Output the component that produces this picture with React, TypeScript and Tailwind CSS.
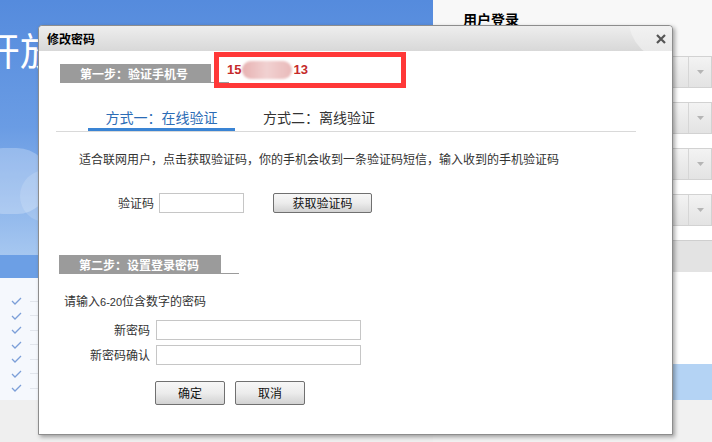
import React from "react";

const cjk = { fontFamily: "'Noto Sans CJK SC', 'Noto Sans', sans-serif" };

function Dropdown() {
  return (
    <div className="ml-[18px] h-[32px] border border-[#d2d2d2] bg-gradient-to-b from-[#f3f3f3] to-[#e3e3e3] flex justify-end">
      <div className="w-[23px] border-l border-[#d6d6d6] flex items-center justify-center">
        <svg width="7" height="4" viewBox="0 0 7 4">
          <path d="M0 0 L7 0 L3.5 4 Z" fill="#b5b5b5" />
        </svg>
      </div>
    </div>
  );
}

function Check() {
  return (
    <div className="flex items-center h-[14.5px]">
      <svg width="11" height="8" viewBox="0 0 11 8" className="ml-[11px]">
        <path d="M1 4 L4 7 L10 1" stroke="#7c9fd8" strokeWidth="1.3" fill="none" />
      </svg>
      <div className="ml-[8px] w-[30px] h-px bg-[#e1e5ec]" />
    </div>
  );
}

function Btn({ children, w, h }: { children: React.ReactNode; w: string; h: string }) {
  return (
    <button
      className={`${w} ${h} border border-[#707070] rounded-[2px] bg-gradient-to-b from-[#f7f7f7] via-[#ececec] to-[#d2d2d2] text-[12px] text-[#111] flex items-center justify-center p-0`}
      style={cjk}
    >
      {children}
    </button>
  );
}

export default function App() {
  return (
    <div className="relative w-[712px] h-[442px] overflow-hidden flex" style={cjk}>
      {/* left background */}
      <div className="w-[433px] h-full flex flex-col">
        <div className="relative h-[255px] bg-gradient-to-b from-[#558bdd] via-[#6a9ce4] to-[#a6c7f0] overflow-hidden">
          <div className="absolute left-[-18px] top-[26px] text-[38px] leading-[46px] text-white">开放</div>
          <div className="absolute left-[-30px] top-[148px] w-[80px] h-[66px] rounded-full bg-white/25" />
          <div className="absolute left-[20px] top-[170px] w-[60px] h-[52px] rounded-full bg-white/15" />
        </div>
        <div className="h-[23px] bg-[#6c9fe5]" />
        <div className="flex-1 bg-[#f5f8fd] pt-[16px] flex flex-col">
          <Check />
          <Check />
          <Check />
          <Check />
          <Check />
          <Check />
          <Check />
        </div>
        <div className="h-[42px] bg-[#efefef]" />
      </div>
      {/* right panel */}
      <div className="flex-1 h-full flex flex-col bg-[#f8f8f8]">
        <div className="h-[56px] pl-[30px] pt-[10px] text-[14px] font-bold text-black leading-[18px]">用户登录</div>
        <Dropdown />
        <div className="h-[14px] bg-white" />
        <Dropdown />
        <div className="h-[14px] bg-white" />
        <Dropdown />
        <div className="h-[14px] bg-white" />
        <Dropdown />
        <div className="h-[14px] bg-white" />
        <div className="h-[32px] bg-[#e3e3e3] border-t border-[#cfcfcf]" />
        <div className="h-[92px] bg-white" />
        <div className="h-[36px] bg-[#b4d3f4]" />
        <div className="flex-1 bg-[#f1f1f1]" />
      </div>

      {/* dialog */}
      <div className="absolute left-[38px] top-[25px] w-[635px] h-[410px] bg-white border border-[#8d8d8d] rounded-t-[4px] shadow-[2px_2px_4px_rgba(0,0,0,0.35)] flex flex-col">
        <div className="relative h-[25px] rounded-t-[4px] bg-gradient-to-b from-[#eeeeee] to-[#d8d8d8] flex items-center overflow-hidden">
          <span className="pl-[8px] text-[12px] font-bold text-black">修改密码</span>
          <div className="absolute left-[590px] top-[-6px] w-[80px] h-[40px] rounded-bl-[40px] bg-gradient-to-b from-[#f4f4f4] to-[#e6e6e6]" />
          <svg className="absolute left-[617px] top-[8px]" width="10" height="10" viewBox="0 0 10 10">
            <path d="M1 1 L9 9 M9 1 L1 9" stroke="#555" strokeWidth="2.2" />
          </svg>
        </div>

        {/* step 1 */}
        <div className="mt-[13px] ml-[21px] flex items-end">
          <div className="w-[151px] h-[19px] bg-[#9b9b9b] text-white text-[12px] font-bold leading-[19px] pl-[20px]">第一步：验证手机号</div>
          <div className="w-[18px] h-px bg-[#9b9b9b]" />
        </div>

        {/* tabs */}
        <div className="mt-[24px] ml-[17px] w-[580px] border-b border-[#d9d9d9] flex items-end">
          <div className="ml-[32px] w-[147px] text-center text-[14px] leading-[20px] pb-px text-[#2b6cb6] border-b-[3px] border-[#3a84d4]">方式一：在线验证</div>
          <div className="ml-[28px] text-[14px] leading-[20px] pb-[4px] text-[#333]">方式二：离线验证</div>
        </div>

        <div className="mt-[18px] ml-[40px] text-[12px] leading-[18px] text-[#333]">适合联网用户，点击获取验证码，你的手机会收到一条验证码短信，输入收到的手机验证码</div>

        <div className="mt-[25px] ml-[79px] flex items-center">
          <span className="text-[12px] text-[#333] leading-[20px]">验证码</span>
          <div className="ml-[5px] w-[85px] h-[20px] border border-[#c6c6c6]" />
          <div className="ml-[29px]">
            <Btn w="w-[99px]" h="h-[20px]">获取验证码</Btn>
          </div>
        </div>

        {/* step 2 */}
        <div className="mt-[42px] ml-[20px] flex items-end">
          <div className="w-[162px] h-[19px] bg-[#9b9b9b] text-white text-[12px] font-bold leading-[19px] pl-[20px]">第二步：设置登录密码</div>
          <div className="w-[18px] h-px bg-[#9b9b9b]" />
        </div>

        <div className="mt-[18px] ml-[25px] text-[12px] leading-[18px] text-[#333]">
          请输入<span style={{ fontFamily: "'Liberation Sans', sans-serif" }} className="text-[11px]">6-20</span>位含数字的密码
        </div>

        <div className="mt-[9px] flex items-center">
          <span className="w-[111px] text-right text-[12px] text-[#333] leading-[20px]">新密码</span>
          <div className="ml-[6px] w-[205px] h-[20px] border border-[#c6c6c6]" />
        </div>
        <div className="mt-[5px] flex items-center">
          <span className="w-[111px] text-right text-[12px] text-[#333] leading-[20px]">新密码确认</span>
          <div className="ml-[6px] w-[205px] h-[20px] border border-[#c6c6c6]" />
        </div>

        <div className="mt-[16px] ml-[116px] flex gap-[10px]">
          <Btn w="w-[70px]" h="h-[24px]">确定</Btn>
          <Btn w="w-[70px]" h="h-[24px]">取消</Btn>
        </div>

        {/* red annotation */}
        <div className="absolute left-[175px] top-[26px] w-[192px] h-[36px] border-[5px] border-[#ff3838] flex items-center pl-[8px]">
          <span className="text-[13px] font-bold text-[#c52a2a]" style={{ fontFamily: "'Liberation Sans', sans-serif" }}>15</span>
          <span className="ml-[1px] w-[50px] h-[18px] rounded-full bg-gradient-to-r from-[#e7b2b2] via-[#f1d1d1] to-[#e9baba] blur-[1px]" />
          <span className="ml-[1px] text-[13px] font-bold text-[#c52a2a]" style={{ fontFamily: "'Liberation Sans', sans-serif" }}>13</span>
        </div>
      </div>
    </div>
  );
}
